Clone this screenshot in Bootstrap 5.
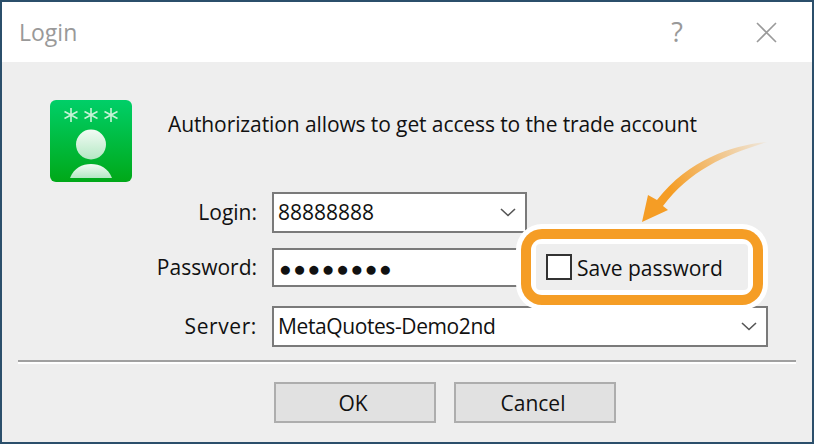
<!DOCTYPE html>
<html lang="en">
<head>
  <meta charset="UTF-8" />
  <meta name="viewport" content="width=device-width, initial-scale=1" />
  <title>Login</title>
  <link href="https://cdn.jsdelivr.net/npm/bootstrap@5.3.3/dist/css/bootstrap.min.css" rel="stylesheet" />
  <style>
    html, body { height: 100%; margin: 0; background: #eeeeee; overflow: hidden; }
    body { font-family: "Open Sans", "Noto Sans", sans-serif; font-size: 21px; color: #111; }

    .dlg-window { position: relative; width: 814px; height: 444px; border: 2px solid #2b4f6b; background: #eeeeee; }

    .dlg-title { height: 60px; background: #fff; padding: 0 35px 0 17px; }
    .dlg-title-text { color: #999; font-size: 23px; }
    .dlg-help { color: #999; font-size: 27px; margin-right: 73px; }

    .dlg-head { padding: 38px 0 0 48px; height: 120px; }
    .dlg-head-text { margin-left: 36px; margin-bottom: 32px; letter-spacing: -0.1px; }
    .app-icon { display: block; width: 82px; height: 82px; }

    .dlg-form { padding: 10px 0 0 48px; }
    .field-row { margin-bottom: 15px; }
    .field-row.is-pass { margin-bottom: 19px; }
    .field-label { width: 207px; text-align: right; margin-right: 15px; padding-top: 1px; }
    .field-label.is-server { letter-spacing: 0.6px; }

    .field-box, .field-box:focus {
      height: 41px;
      width: 255px;
      padding: 1px 30px 0 4px;
      border: 2px solid #7a7a7a;
      border-radius: 0;
      box-shadow: none;
      color: #111;
      font-size: 21px;
      background-color: #fff;
    }
    select.field-box {
      background-image: url("data:image/svg+xml,%3csvg xmlns='http://www.w3.org/2000/svg' viewBox='0 0 16 9'%3e%3cpath fill='none' stroke='%23555' stroke-width='1.6' d='M1 1l7 6.5L15 1'/%3e%3c/svg%3e");
      background-position: right 9px center;
      background-size: 16px 9px;
    }
    .field-box.is-short { height: 39px; padding-left: 5px; letter-spacing: 1.6px; }
    .field-box.is-wide { width: 496px; letter-spacing: -0.4px; }

    .dlg-rule { width: 778px; margin: 13px 0 0 16px; height: 4px; border-top: 2px solid #a0a0a0; border-bottom: 2px solid #fff; opacity: 1; background: none; }

    .dlg-actions { padding: 18px 0 0 272px; gap: 18px; }
    .dlg-btn, .dlg-btn:hover {
      width: 162px;
      height: 41px;
      padding: 2px 4px 0 0;
      background: #e1e1e1;
      border: 2px solid #adadad;
      border-radius: 0;
      color: #111;
      font-size: 21px;
    }

    /* callout over the save password checkbox */
    .save-halo {
      position: absolute;
      left: 514px;
      top: 222px;
      width: 252px;
      height: 86px;
      padding: 5px;
      background: #fff;
      border-radius: 26px;
    }
    .save-ring { height: 100%; padding: 10px; background: #f59d25; border-radius: 21px; }
    .save-inner { height: 100%; padding: 5px; background: #fff; border-radius: 11px; }
    .save-body { height: 100%; padding-left: 10px; background: #eeeeee; border-radius: 4px; }
    .save-box { width: 26px; height: 26px; border: 2px solid #333; background: #fff; margin-right: 5px; }
    .save-label { padding-top: 3px; }

    .call-arrow { position: absolute; left: 0; top: 0; width: 814px; height: 444px; pointer-events: none; }
  </style>
</head>
<body>
  <div class="dlg-window">

    <div class="dlg-title d-flex align-items-center">
      <span class="dlg-title-text me-auto">Login</span>
      <span class="dlg-help">?</span>
      <svg width="21" height="21" viewBox="0 0 21 21"><path d="M1 1l19 19M20 1L1 20" fill="none" stroke="#9a9a9a" stroke-width="1.6"/></svg>
    </div>

    <div class="dlg-head d-flex align-items-center">
      <svg class="app-icon" viewBox="0 0 82 82">
        <defs>
          <linearGradient id="iconBg" x1="0" y1="0" x2="0" y2="1">
            <stop offset="0" stop-color="#00cf68" />
            <stop offset="1" stop-color="#00a818" />
          </linearGradient>
          <linearGradient id="iconFg" x1="0" y1="0" x2="0" y2="1">
            <stop offset="0" stop-color="#f2fbf4" />
            <stop offset="1" stop-color="#b4e8c4" />
          </linearGradient>
        </defs>
        <rect width="82" height="82" rx="6" fill="url(#iconBg)" />
        <g stroke="#c8f3d8" stroke-width="1.6" fill="none">
          <path d="M21 8v14M14.500 11.500l13 7M27.500 11.500l-13 7" />
          <path d="M41 8v14M34.500 11.500l13 7M47.500 11.500l-13 7" />
          <path d="M61 8v14M54.500 11.500l13 7M67.500 11.500l-13 7" />
        </g>
        <circle cx="41" cy="44.500" r="15" fill="url(#iconFg)" />
        <path d="M20 78c4-10 12-14 21-14s17 4 21 14z" fill="url(#iconFg)" />
      </svg>
      <div class="dlg-head-text">Authorization allows to get access to the trade account</div>
    </div>

    <div class="dlg-form">
      <div class="field-row d-flex align-items-center">
        <label class="field-label">Login:</label>
        <select class="form-select field-box"><option>88888888</option></select>
      </div>
      <div class="field-row is-pass d-flex align-items-center">
        <label class="field-label">Password:</label>
        <input class="form-control field-box is-short" type="text" value="●●●●●●●●" />
      </div>
      <div class="d-flex align-items-center">
        <label class="field-label is-server">Server:</label>
        <select class="form-select field-box is-wide"><option>MetaQuotes-Demo2nd</option></select>
      </div>
    </div>

    <hr class="dlg-rule" />

    <div class="dlg-actions d-flex">
      <button class="btn dlg-btn" type="button">OK</button>
      <button class="btn dlg-btn" type="button">Cancel</button>
    </div>

    <div class="save-halo">
      <div class="save-ring">
        <div class="save-inner">
          <div class="save-body d-flex align-items-center">
            <span class="save-box"></span>
            <span class="save-label">Save password</span>
          </div>
        </div>
      </div>
    </div>

    <svg class="call-arrow" viewBox="2 2 814 444">
      <defs>
        <linearGradient id="tailFade" gradientUnits="userSpaceOnUse" x1="767" y1="142" x2="670" y2="190">
          <stop offset="0" stop-color="#f59d25" stop-opacity="0.08" />
          <stop offset="1" stop-color="#f59d25" />
        </linearGradient>
      </defs>
      <path d="M767 142C735 145 690 158 657 200L648 195L642 222L668 210L663 206C690 170 725 155 767 142Z" fill="url(#tailFade)" />
    </svg>

  </div>

  <script src="https://cdn.jsdelivr.net/npm/bootstrap@5.3.3/dist/js/bootstrap.bundle.min.js"></script>
</body>
</html>
